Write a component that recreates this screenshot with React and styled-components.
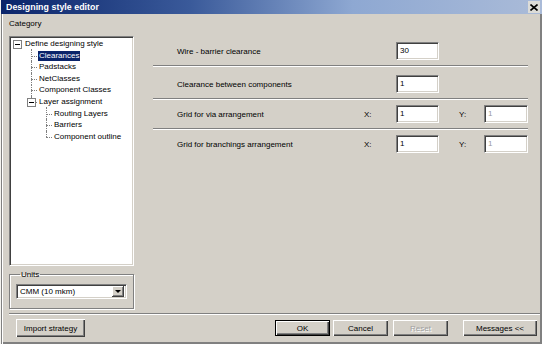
import React from "react";
import styled, { createGlobalStyle } from "styled-components";

const Global = createGlobalStyle`
  html, body { margin: 0; padding: 0; background: #d4d0c8; }
  body { font-family: "Liberation Sans", Arial, sans-serif; font-size: 8px; color: #000; }
  * { box-sizing: border-box; }
`;

const Window = styled.div`
  width: 542px;
  height: 344px;
  display: flex;
  flex-direction: column;
  background: #d4d0c8;
  border-left: 1px solid #f4f3ef;
  box-shadow: inset 1px 0 #808080, inset 2px 0 #ffffff, inset -2px -2px #808080, inset -1px -1px #404040;
  overflow: hidden;
`;

const TitleBar = styled.div`
  height: 14px;
  flex: none;
  display: flex;
  align-items: center;
  justify-content: space-between;
  padding: 0 2px 0 5px;
  background: linear-gradient(90deg, #0a246a 0%, #3a5a9a 35%, #8ea8d2 65%, #aabbd8 100%);
`;

const Title = styled.span`
  color: #fff;
  font-weight: bold;
  font-size: 8.8px;
  letter-spacing: 0.05px;
`;

const CloseBtn = styled.div`
  width: 12px;
  height: 12px;
  background: #dcdcd8;
  display: flex;
  align-items: center;
  justify-content: center;
`;

const Body = styled.div`
  flex: 1;
  display: flex;
  flex-direction: column;
  padding: 4px 5px 0 8px;
`;

const Main = styled.div`
  display: flex;
  flex: none;
  height: 294px;
`;

const LeftCol = styled.div`
  width: 125px;
  flex: none;
  display: flex;
  flex-direction: column;
`;

const CategoryLabel = styled.div`
  height: 18px;
  line-height: 12px;
  padding-left: 0px;
`;

const TreeBox = styled.div`
  height: 230px;
  background: #fff;
  border: 1px solid;
  border-color: #808080 #ffffff #ffffff #808080;
  box-shadow: inset 1px 1px #404040, inset -1px -1px #d4d0c8;
  padding-top: 1px;
  position: relative;
`;

const TreeItem = styled.div`
  position: relative;
  height: 11.6px;
  line-height: 11.6px;
  padding-left: ${(p) => [14, 28, 43][p.$level]}px;
  white-space: nowrap;

  ${(p) =>
    p.$level > 0 &&
    `
    &::before {
      content: "";
      position: absolute;
      left: ${p.$level === 1 ? 21 : 36}px;
      top: 6px;
      width: ${p.$level === 1 ? 6 : 6}px;
      border-top: 1px dotted #808080;
    }
    &::after {
      content: "";
      position: absolute;
      left: ${p.$level === 1 ? 21 : 36}px;
      top: ${p.$first ? -1 : 0}px;
      height: ${p.$last ? 6 : 12}px;
      border-left: 1px dotted #808080;
    }
  `}
`;

const ItemText = styled.span`
  display: inline-block;
  padding: 0 1px;
  line-height: 10px;
  background: ${(p) => (p.$selected ? "#0a246a" : "transparent")};
  color: ${(p) => (p.$selected ? "#fff" : "#000")};
`;

const Expander = styled.span`
  position: absolute;
  z-index: 1;
  left: ${(p) => p.$left}px;
  top: 2px;
  width: 9px;
  height: 9px;
  border: 1px solid #808080;
  background: #fff;
  &::before {
    content: "";
    position: absolute;
    left: 1px;
    top: 3px;
    width: 5px;
    border-top: 1px solid #000;
  }
`;

const GroupBox = styled.fieldset`
  margin: 4px 0 0 0;
  padding: 2px 6px 5px 6px;
  height: 39px;
  border: 1px solid #808080;
  box-shadow: 1px 1px #fff, inset 1px 1px #fff;
`;

const Legend = styled.legend`
  padding: 0 1px;
  margin-left: 4px;
  line-height: 9px;
`;

const Select = styled.div`
  height: 15px;
  margin-top: 3px;
  background: #fff;
  border: 1px solid;
  border-color: #808080 #ffffff #ffffff #808080;
  box-shadow: inset 1px 1px #404040, inset -1px -1px #d4d0c8;
  display: flex;
  align-items: center;
  padding: 0 2px 0 3px;
  justify-content: space-between;
`;

const DropBtn = styled.div`
  width: 12px;
  height: 11px;
  background: #d4d0c8;
  box-shadow: inset -1px -1px #404040, inset 1px 1px #fff, inset -2px -2px #808080;
  display: flex;
  align-items: center;
  justify-content: center;
  &::before {
    content: "";
    border-left: 3px solid transparent;
    border-right: 3px solid transparent;
    border-top: 3px solid #000;
  }
`;

const RightPanel = styled.div`
  margin-left: 19px;
  width: 375px;
  display: flex;
  flex-direction: column;
  padding-top: 19px;
`;

const Row = styled.div`
  display: grid;
  grid-template-columns: 187px 32px 43px 20px 25px 44px;
  align-items: center;
  height: 28px;
  padding-left: 24px;
  margin-top: ${(p) => p.$extra || 0}px;
`;

const Sep = styled.div`
  height: 2px;
  border-top: 1px solid #808080;
  border-bottom: 1px solid #ffffff;
`;

const Label = styled.span``;

const AxisLabel = styled.span`
  padding-left: 0px;
`;

const Input = styled.div`
  grid-column: ${(p) => p.$col};
  height: 18px;
  background: #fff;
  border: 1px solid;
  border-color: #808080 #ffffff #ffffff #808080;
  box-shadow: inset 1px 1px #404040, inset -1px -1px #d4d0c8;
  padding-left: 3px;
  line-height: 16px;
  color: ${(p) => (p.$dim ? "#9a9a9a" : "#000")};
`;

const BottomSep = styled.div`
  height: 2px;
  margin-top: 1px;
  margin-right: -3px;
  border-top: 1px solid #808080;
  border-bottom: 1px solid #ffffff;
`;

const ButtonRow = styled.div`
  display: flex;
  align-items: center;
  padding: 4px 0 0 7px;
  height: 22px;
`;

const Button = styled.div`
  height: ${(p) => (p.$tall ? 18 : 16)}px;
  width: ${(p) => p.$w}px;
  margin-left: ${(p) => p.$ml || 0}px;
  display: flex;
  align-items: center;
  justify-content: center;
  background: #d4d0c8;
  color: ${(p) => (p.$disabled ? "#a0a0a0" : "#000")};
  text-shadow: ${(p) => (p.$disabled ? "1px 1px #fff" : "none")};
  border: ${(p) => (p.$default ? "1px solid #000" : "none")};
  box-shadow: inset 1px 1px #fff, inset -1px -1px #404040, inset -2px -2px #808080;
`;

const Spacer = styled.div`
  flex: 1;
`;

function Tree() {
  return (
    <TreeBox>
      <TreeItem $level={0}>
        <Expander $left={3} />
        <ItemText>Define designing style</ItemText>
      </TreeItem>
      <TreeItem $level={1} $first>
        <ItemText $selected>Clearances</ItemText>
      </TreeItem>
      <TreeItem $level={1}>
        <ItemText>Padstacks</ItemText>
      </TreeItem>
      <TreeItem $level={1}>
        <ItemText>NetClasses</ItemText>
      </TreeItem>
      <TreeItem $level={1}>
        <ItemText>Component Classes</ItemText>
      </TreeItem>
      <TreeItem $level={1} $last>
        <Expander $left={17} />
        <ItemText>Layer assignment</ItemText>
      </TreeItem>
      <TreeItem $level={2} $first>
        <ItemText>Routing Layers</ItemText>
      </TreeItem>
      <TreeItem $level={2}>
        <ItemText>Barriers</ItemText>
      </TreeItem>
      <TreeItem $level={2} $last>
        <ItemText>Component outline</ItemText>
      </TreeItem>
    </TreeBox>
  );
}

export default function App() {
  return (
    <>
      <Global />
      <Window>
        <TitleBar>
          <Title>Designing style editor</Title>
          <CloseBtn>
            <svg width="8" height="7" viewBox="0 0 8 7">
              <path d="M0.5 0.5 L7.5 6.5 M7.5 0.5 L0.5 6.5" stroke="#000" strokeWidth="1.6" />
            </svg>
          </CloseBtn>
        </TitleBar>
        <Body>
          <Main>
            <LeftCol>
              <CategoryLabel>Category</CategoryLabel>
              <Tree />
              <GroupBox>
                <Legend>Units</Legend>
                <Select>
                  <span>CMM (10 mkm)</span>
                  <DropBtn />
                </Select>
              </GroupBox>
            </LeftCol>
            <RightPanel>
              <Row>
                <Label>Wire - barrier clearance</Label>
                <Input $col={3}>30</Input>
              </Row>
              <Sep />
              <Row $extra={3}>
                <Label>Clearance between components</Label>
                <Input $col={3}>1</Input>
              </Row>
              <Sep />
              <Row>
                <Label>Grid for via arrangement</Label>
                <AxisLabel>X:</AxisLabel>
                <Input $col={3}>1</Input>
                <AxisLabel style={{ gridColumn: 5 }}>Y:</AxisLabel>
                <Input $col={6} $dim>1</Input>
              </Row>
              <Sep />
              <Row>
                <Label>Grid for branchings arrangement</Label>
                <AxisLabel>X:</AxisLabel>
                <Input $col={3}>1</Input>
                <AxisLabel style={{ gridColumn: 5 }}>Y:</AxisLabel>
                <Input $col={6} $dim>1</Input>
              </Row>
            </RightPanel>
          </Main>
          <BottomSep />
          <ButtonRow>
            <Button $w={69} $tall>Import strategy</Button>
            <Spacer />
            <Button $w={55} $default>OK</Button>
            <Button $w={55} $ml={3}>Cancel</Button>
            <Button $w={55} $ml={5} $disabled>Reset</Button>
            <Button $w={74} $ml={15}>Messages &lt;&lt;</Button>
          </ButtonRow>
        </Body>
      </Window>
    </>
  );
}
